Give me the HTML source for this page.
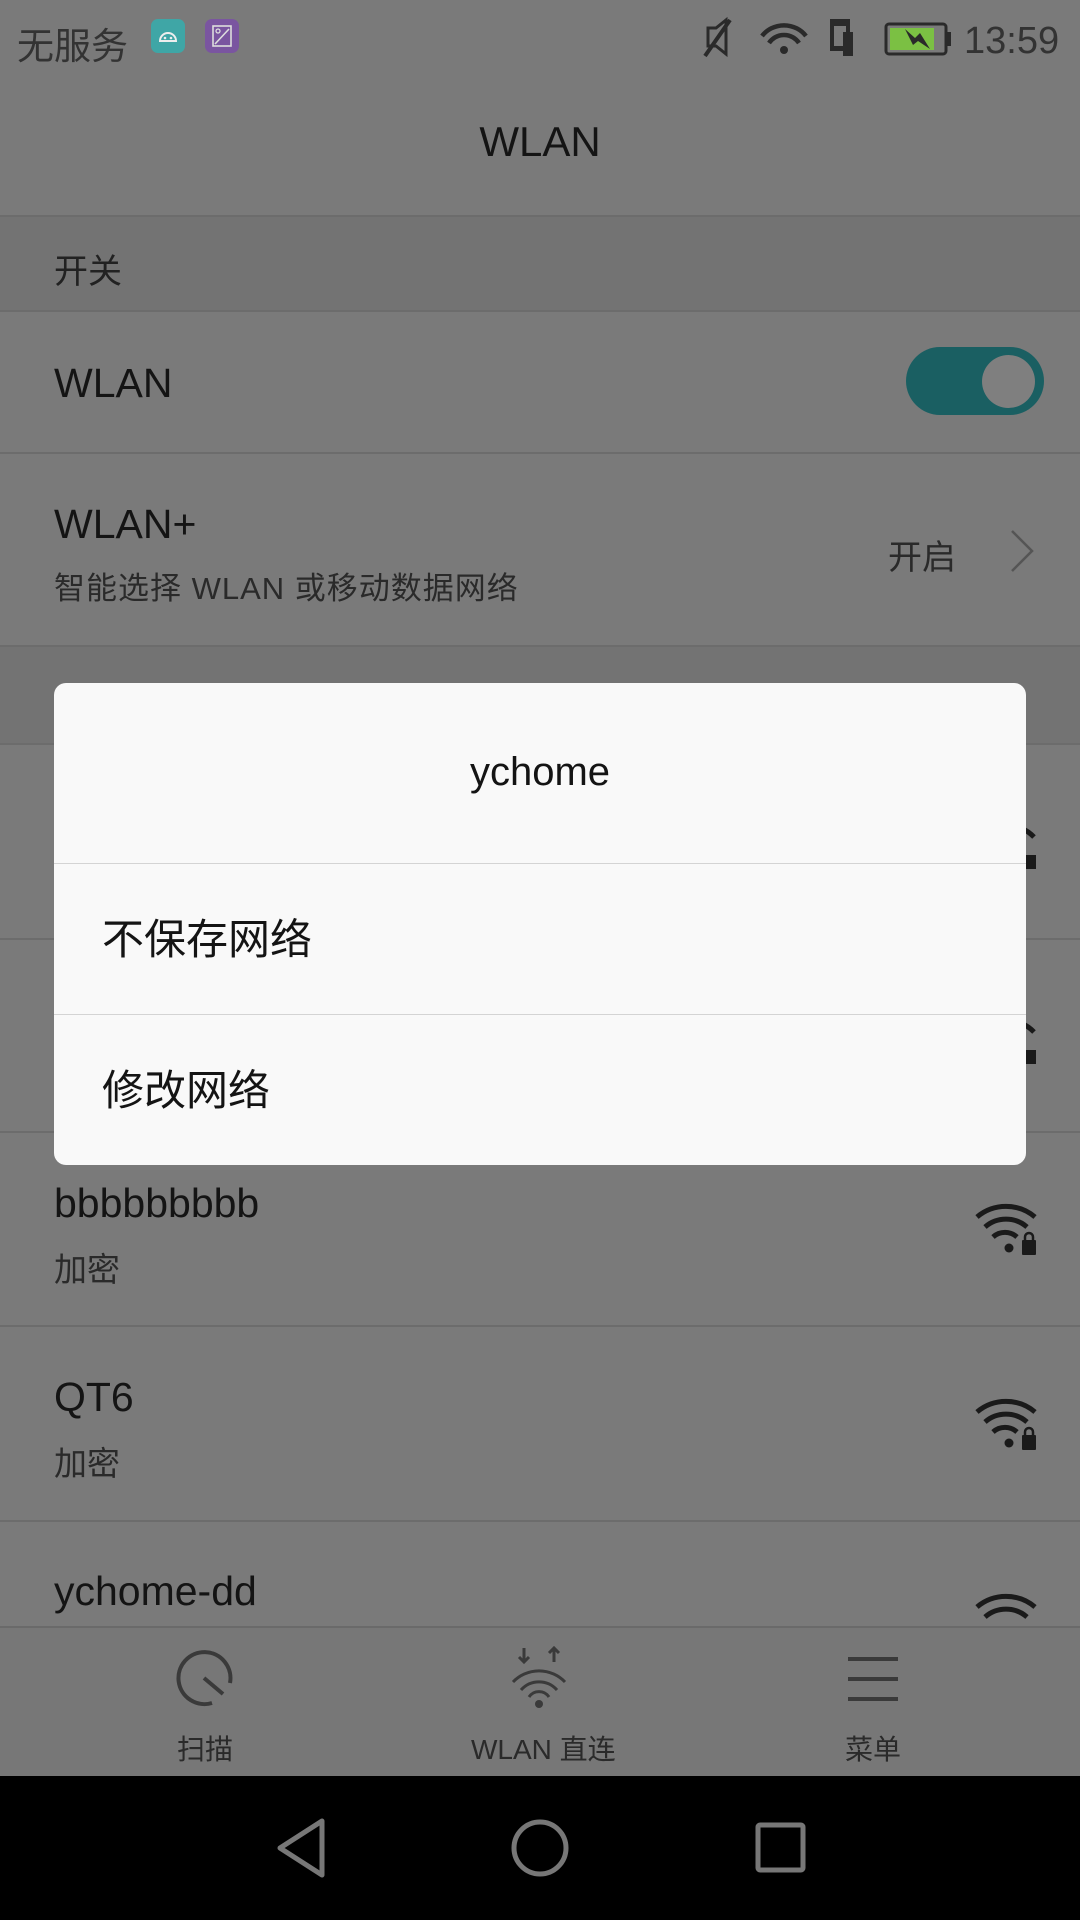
<!DOCTYPE html>
<html><head><meta charset="utf-8">
<style>
*{margin:0;padding:0;box-sizing:border-box}
body{width:1080px;height:1920px;overflow:hidden;background:#7a7a7a;font-family:"Liberation Sans","Noto Sans CJK SC",sans-serif;color:#141414;position:relative}
.abs{position:absolute}
.line{position:absolute;left:0;width:1080px;height:2px;background:#6c6c6c}
.t{position:absolute;white-space:nowrap}
</style></head><body>
<!-- status bar -->
<div class="t" style="left:17px;top:16px;font-size:37px;color:#333">无服务</div>
<div class="abs" style="left:151px;top:19px;width:34px;height:34px;border-radius:7px;background:#3fa6a6"></div>
<svg class="abs" style="left:151px;top:19px" width="34" height="34"><path d="M9 22 a8 8 0 0 1 16 0 Z" fill="none" stroke="#eee" stroke-width="2"/><circle cx="14" cy="19" r="1.3" fill="#eee"/><circle cx="20" cy="19" r="1.3" fill="#eee"/></svg>
<div class="abs" style="left:205px;top:19px;width:34px;height:34px;border-radius:7px;background:#7a55a0"></div>
<svg class="abs" style="left:205px;top:19px" width="34" height="34"><rect x="8" y="7" width="18" height="20" fill="none" stroke="#ddd" stroke-width="1.6"/><path d="M10 25 L24 10" stroke="#ddd" stroke-width="1.6"/><circle cx="13" cy="12" r="2" fill="none" stroke="#ddd" stroke-width="1.3"/></svg>
<svg class="abs" style="left:700px;top:14px" width="380" height="50">
<path d="M8 14 L16 14 L26 6 L26 40 L16 32 L8 32 Z" fill="none" stroke="#2a2a2a" stroke-width="3"/><path d="M5 42 L30 6" stroke="#2a2a2a" stroke-width="4"/>
<g fill="none" stroke="#2a2a2a" stroke-width="4.5"><path d="M62 22 a28 28 0 0 1 44 0"/><path d="M69 29 a18 18 0 0 1 30 0"/></g><circle cx="84" cy="36" r="4" fill="#2a2a2a"/>
<rect x="130" y="5" width="20" height="32" fill="#2a2a2a"/><rect x="134" y="12" width="12" height="20" fill="#7a7a7a"/><rect x="143" y="18" width="10" height="24" fill="#2a2a2a"/>
<rect x="186" y="10" width="60" height="30" rx="3" fill="none" stroke="#2a2a2a" stroke-width="3"/><rect x="190" y="14" width="44" height="22" fill="#7bc043"/><rect x="247" y="18" width="4" height="14" fill="#2a2a2a"/><path d="M205 15 L215 24 L220 19 L230 35 L218 27 L213 31 Z" fill="#2a2a2a"/>
<text x="264" y="39" font-family="Liberation Sans" font-size="38" fill="#333">13:59</text>
</svg>
<!-- title -->
<div class="t" style="left:0;width:1080px;text-align:center;top:118px;font-size:42px">WLAN</div>
<div class="line" style="top:215px"></div>
<div class="abs" style="left:0;top:217px;width:1080px;height:93px;background:#737373"></div>
<div class="t" style="left:54px;top:244px;font-size:34px;color:#222">开关</div>
<div class="line" style="top:310px"></div>
<div class="t" style="left:54px;top:360px;font-size:41px">WLAN</div>
<div class="abs" style="left:906px;top:347px;width:138px;height:68px;border-radius:34px;background:#1a5f62"></div>
<div class="abs" style="left:982px;top:355px;width:53px;height:53px;border-radius:50%;background:#7f7f7f"></div>
<div class="line" style="top:452px"></div>
<div class="t" style="left:54px;top:501px;font-size:41px">WLAN+</div>
<div class="t" style="left:54px;top:563px;font-size:31px;color:#2a2a2a;letter-spacing:1px">智能选择 WLAN 或移动数据网络</div>
<div class="t" style="left:888px;top:530px;font-size:34px;color:#2a2a2a">开启</div>
<svg class="abs" style="left:1008px;top:528px" width="30" height="46"><path d="M4 3 L24 23 L4 43" fill="none" stroke="#555" stroke-width="2.5"/></svg>
<div class="line" style="top:645px"></div>
<div class="abs" style="left:0;top:647px;width:1080px;height:97px;background:#737373"></div>
<div class="line" style="top:743px"></div>
<div class="line" style="top:938px"></div>
<div class="line" style="top:1131px"></div>
<div class="line" style="top:1325px"></div>
<div class="line" style="top:1520px"></div>
<!-- wifi icons -->
<svg class="abs" style="left:970px;top:815px" width="70" height="60"><g fill="none" stroke="#1a1a1a" stroke-width="5"><path d="M4 22 a42 42 0 0 1 60 0"/><path d="M14 32 a28 28 0 0 1 40 0"/></g><rect x="52" y="40" width="14" height="14" fill="#1a1a1a"/></svg>
<svg class="abs" style="left:970px;top:1010px" width="70" height="60"><g fill="none" stroke="#1a1a1a" stroke-width="5"><path d="M4 22 a42 42 0 0 1 60 0"/><path d="M14 32 a28 28 0 0 1 40 0"/></g><rect x="52" y="40" width="14" height="14" fill="#1a1a1a"/></svg>
<div class="t" style="left:54px;top:1180px;font-size:41px">bbbbbbbbb</div>
<div class="t" style="left:54px;top:1243px;font-size:33px;color:#2a2a2a">加密</div>
<div class="t" style="left:54px;top:1374px;font-size:41px">QT6</div>
<div class="t" style="left:54px;top:1437px;font-size:33px;color:#2a2a2a">加密</div>
<div class="t" style="left:54px;top:1568px;font-size:41px">ychome-dd</div>
<svg class="abs" style="left:972px;top:1200px" width="70" height="60"><g fill="none" stroke="#1a1a1a" stroke-width="5"><path d="M5 17 a45 45 0 0 1 58 0"/><path d="M13 27 a32 32 0 0 1 42 0"/><path d="M21 37 a18 18 0 0 1 24 0"/></g><circle cx="37" cy="48" r="4.5" fill="#1a1a1a"/><rect x="50" y="40" width="14" height="15" rx="1" fill="#1a1a1a"/><path d="M53 41 v-4 a4 4 0 0 1 8 0 v4" fill="none" stroke="#1a1a1a" stroke-width="2.5"/></svg>
<svg class="abs" style="left:972px;top:1395px" width="70" height="60"><g fill="none" stroke="#1a1a1a" stroke-width="5"><path d="M5 17 a45 45 0 0 1 58 0"/><path d="M13 27 a32 32 0 0 1 42 0"/><path d="M21 37 a18 18 0 0 1 24 0"/></g><circle cx="37" cy="48" r="4.5" fill="#1a1a1a"/><rect x="50" y="40" width="14" height="15" rx="1" fill="#1a1a1a"/><path d="M53 41 v-4 a4 4 0 0 1 8 0 v4" fill="none" stroke="#1a1a1a" stroke-width="2.5"/></svg>
<svg class="abs" style="left:972px;top:1590px" width="70" height="36"><g fill="none" stroke="#1a1a1a" stroke-width="5"><path d="M5 17 a45 45 0 0 1 58 0"/><path d="M13 27 a32 32 0 0 1 42 0"/></g></svg>
<!-- bottom bar -->
<div class="abs" style="left:0;top:1626px;width:1080px;height:150px;background:#777;border-top:2px solid #6a6a6a"></div>
<svg class="abs" style="left:175px;top:1648px" width="62" height="62"><path d="M37 55 A26 26 0 1 1 55 35" fill="none" stroke="#3a3a3a" stroke-width="4"/><path d="M29 30 L48 46" stroke="#3a3a3a" stroke-width="4"/></svg>
<div class="t" style="left:177px;top:1728px;font-size:28px;color:#2a2a2a">扫描</div>
<svg class="abs" style="left:508px;top:1646px" width="62" height="62"><g stroke="#3a3a3a" stroke-width="3" fill="none"><path d="M16 2 v14 M11 11 l5 5 5-5"/><path d="M46 16 v-14 M41 7 l5-5 5 5"/><path d="M5 36 a36 36 0 0 1 52 0"/><path d="M13 44 a24 24 0 0 1 36 0"/><path d="M21 51 a12 12 0 0 1 20 0"/></g><circle cx="31" cy="58" r="4" fill="#3a3a3a"/></svg>
<div class="t" style="left:471px;top:1728px;font-size:28px;color:#2a2a2a">WLAN 直连</div>
<svg class="abs" style="left:846px;top:1656px" width="54" height="46"><g stroke="#3a3a3a" stroke-width="4"><path d="M2 3 H52 M2 23 H52 M2 43 H52"/></g></svg>
<div class="t" style="left:845px;top:1728px;font-size:28px;color:#2a2a2a">菜单</div>
<!-- nav bar -->
<div class="abs" style="left:0;top:1776px;width:1080px;height:144px;background:#000"></div>
<svg class="abs" style="left:0;top:1776px" width="1080" height="144"><g fill="none" stroke="#777" stroke-width="5"><path d="M322 45 L280 72 L322 99 Z" stroke-linejoin="round"/><circle cx="540" cy="72" r="26"/><rect x="758" y="49" width="45" height="45" rx="2"/></g></svg>
<!-- dialog -->
<div class="abs" style="left:54px;top:683px;width:972px;height:482px;border-radius:12px;background:#f9f9f9"></div>
<div class="t" style="left:54px;width:972px;text-align:center;top:750px;font-size:40px">ychome</div>
<div class="abs" style="left:54px;top:863px;width:972px;height:1px;background:#d4d4d4"></div>
<div class="t" style="left:102px;top:906px;font-size:42px">不保存网络</div>
<div class="abs" style="left:54px;top:1014px;width:972px;height:1px;background:#d4d4d4"></div>
<div class="t" style="left:102px;top:1057px;font-size:42px">修改网络</div>
</body></html>
